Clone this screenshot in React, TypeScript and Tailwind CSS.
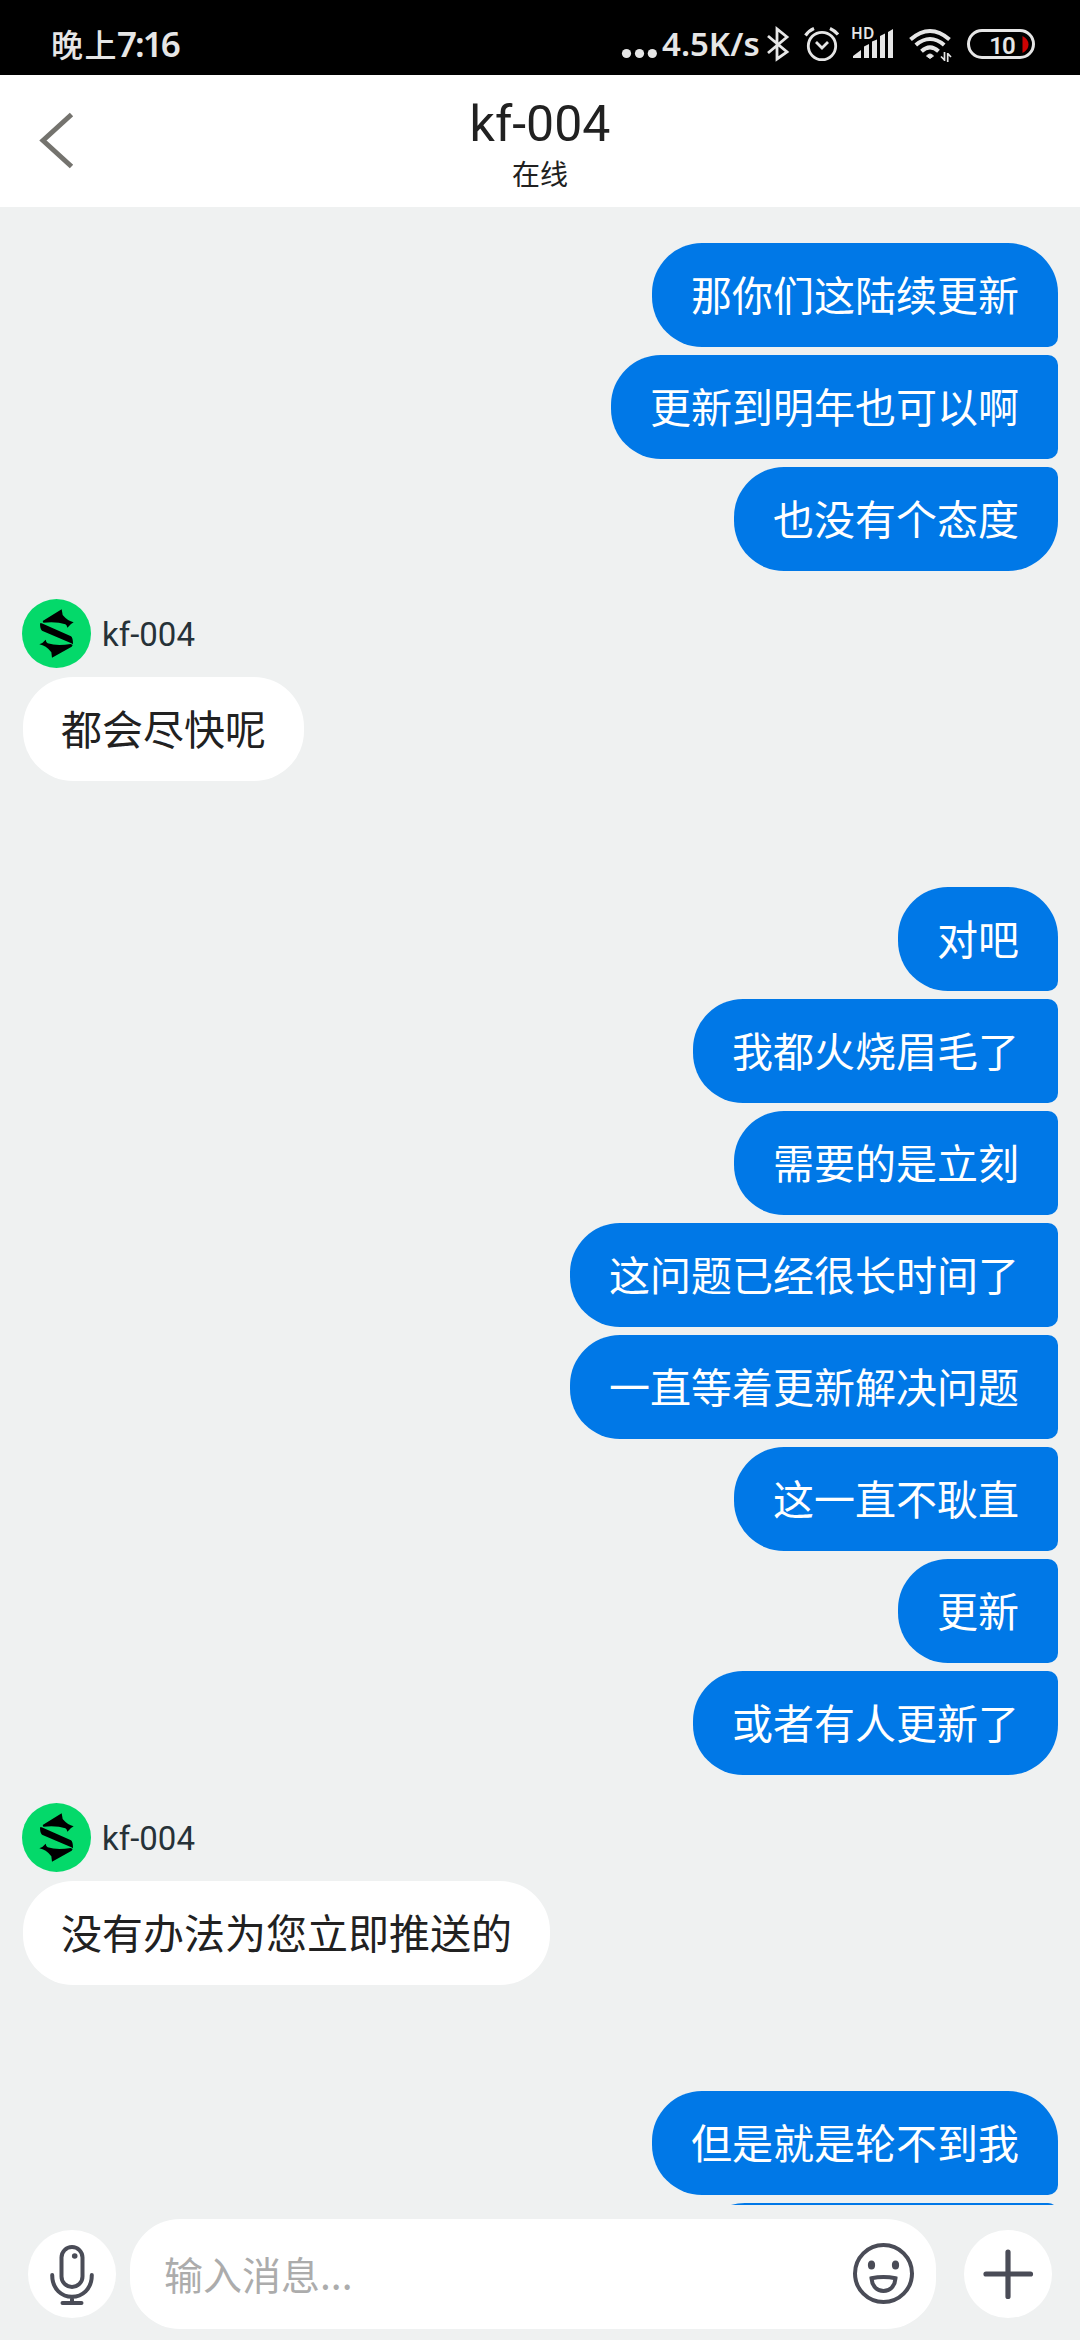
import clsx from "clsx";

const firstBatch = ["那你们这陆续更新", "更新到明年也可以啊", "也没有个态度"];

const secondBatch = [
  "对吧",
  "我都火烧眉毛了",
  "需要的是立刻",
  "这问题已经很长时间了",
  "一直等着更新解决问题",
  "这一直不耿直",
  "更新",
  "或者有人更新了",
];

const StatusBar = () => (
  <div className="flex h-[75px] shrink-0 items-start justify-between bg-black pl-[51px] pr-[45px] text-[#e6e6e6]">
    <div className="flex leading-[48px] font-medium">
      <span className="pt-[19px] text-[32px] tracking-[1.5px]">晚上</span>
      <span className="-ml-px pt-[20px] font-['Noto_Sans'] text-[35px] font-semibold tracking-[-2px]">7:16</span>
    </div>

    <div className="flex">
      <svg width="36" height="75" viewBox="621 0 36 75" fill="currentColor">
        <circle cx="626.5" cy="53.5" r="4.6" />
        <circle cx="639.5" cy="53.5" r="4.6" />
        <circle cx="652.3" cy="53.5" r="4.6" />
      </svg>
      <span className="ml-[5px] w-[104px] whitespace-nowrap pt-[20px] font-['Noto_Sans'] text-[33px] leading-[48px] font-semibold">
        4.5K/s
      </span>

      {/* Bluetooth */}
      <svg width="24" height="75" viewBox="766 0 24 75" fill="none" stroke="currentColor" strokeWidth="2.8">
        <path d="M768 36L787 52L777 59V29L787 37L768 53" />
      </svg>

      {/* Alarm */}
      <svg width="38" height="75" viewBox="803 0 38 75" className="ml-[13px]" fill="none" stroke="currentColor" strokeWidth="2.8">
        <circle cx="822" cy="46" r="13.7" />
        <path d="M816 42L822 48L828 42" />
        <path d="M805.5 35.5Q809 30.5 814 28.5M838 34.5Q834.5 30.5 830 28.5" strokeWidth="3.2" />
      </svg>

      {/* Signal */}
      <div className="relative ml-[10px] h-[75px] w-[43px]">
        <span className="absolute top-[25px] left-0 font-['Noto_Sans'] text-[15.5px] leading-[17px] font-semibold tracking-[0.3px]">
          HD
        </span>
        <svg width="43" height="75" viewBox="851 0 43 75" fill="currentColor">
          <path d="M853 58V56L861 50V58ZM864 58V46.5L869 44V58ZM872 58V41.5L877 39.5V58ZM880 58V36L885 33.5V58ZM888 58V32L893 29V58Z" />
        </svg>
      </div>

      {/* Wifi */}
      <svg width="45" height="75" viewBox="908 0 45 75" className="ml-[14px]" fill="none" stroke="currentColor" strokeWidth="4">
        <path d="M910.5 39.5Q930 22.500 949.5 39.5M915.8 45Q930 33 944.2 45M921.5 51.3Q930 43.5 938.5 51.3" />
        <path d="M926.5 56Q930 52 933.5 56L930 58.5Z" fill="currentColor" strokeWidth="1" />
        <path d="M944.5 52V61M941 56.5L944.5 60M947.7 62V53M951 57L947.700 53.5" strokeWidth="1.7" />
      </svg>

      {/* Battery */}
      <div className="relative mt-[29px] ml-[14px] h-[30px] w-[68px] rounded-full border-3 border-current">
        <span className="block pt-px pl-[2px] text-center font-['Roboto'] text-[24px] leading-[26px] font-semibold tracking-[-1px]">
          10
        </span>
        <svg width="7" height="17" viewBox="0 0 7 17" className="absolute top-[4px] right-[3px]">
          <path d="M0.5 0Q6.5 3 6.5 8.5Q6.5 14 0.5 17Z" fill="#cc0202" />
        </svg>
      </div>
    </div>
  </div>
);

const Header = () => (
  <div className="grid h-[132px] shrink-0 grid-cols-[120px_1fr_120px] bg-white text-[#212121]">
    <svg width="120" height="132" viewBox="0 75 120 132" fill="none" stroke="#74736e" strokeWidth="5">
      <path d="M71.5 114.5L43 140.5L71.5 166.5" />
    </svg>
    <div className="flex flex-col items-center pt-[20px]">
      <div className="font-['Roboto'] text-[50px] leading-[58px]">kf-004</div>
      <div className="text-[28px] leading-[40px]">在线</div>
    </div>
  </div>
);

const SentGroup = ({ messages }: { messages: string[] }) => (
  <div className="flex flex-col items-end gap-2 pr-[22px]">
    {messages.map((message, index) => (
      <div
        key={index}
        className={clsx(
          "h-[104px] rounded-l-[50px] bg-[#0078e7] px-[39px] text-[41px] leading-[100px] whitespace-nowrap text-white",
          index === 0 ? "rounded-tr-[50px]" : "rounded-tr-[10px]",
          index > 0 && index === messages.length - 1 ? "rounded-br-[50px]" : "rounded-br-[10px]"
        )}
      >
        {message}
      </div>
    ))}
  </div>
);

const Avatar = () => (
  <svg width="69" height="69" viewBox="0 0 207 207">
    <circle cx="103.5" cy="103.5" r="103.5" fill="#04d96a" />
    <path d="M119 31L122 48Q137 66 155 70Q145 75 136 86Q135 79 130 76Q105 67 64 71L62 66Z" />
    <path d="M54 73L59 73L147 112Q153 116 153 136L148 133L60 95Q54 91 54 73Z" />
    <path d="M52 136Q63 132 71 122Q72 130 77 133Q105 142 146 135L152 138L149 143L90 176L88 160Q72 139 52 136Z" />
  </svg>
);

const ReceivedMessage = ({ name, text }: { name: string; text: string }) => (
  <div className="mt-[28px] mb-[106px] flex flex-col items-start pl-[22px]">
    <div className="flex h-[69px] items-center">
      <Avatar />
      <span className="ml-[11px] pt-[2px] font-['Roboto'] text-[33px] leading-[40px] text-[#263238]">{name}</span>
    </div>
    <div className="mt-[9px] ml-[1px] h-[104px] rounded-[50px] bg-white px-[38px] text-[41px] leading-[100px] whitespace-nowrap text-[#212121]">
      {text}
    </div>
  </div>
);

const InputBar = () => (
  <div className="flex h-[135px] shrink-0 items-center pt-[3px] pl-[28px]">
    <button className="size-[88px] rounded-full bg-white">
      <svg width="88" height="88" viewBox="28 2230 88 88" fill="none" stroke="#4a4c57" strokeWidth="4" strokeLinecap="round">
        <rect x="61.5" y="2247" width="21" height="40" rx="10.5" />
        <circle cx="74.7" cy="2256" r="2.8" fill="#4a4c57" stroke="none" />
        <path d="M52.2 2275C52.2 2304 91.8 2304 91.8 2275M72 2297V2303M62.5 2303H81.5" />
      </svg>
    </button>

    <div className="ml-[14px] flex h-[110px] w-[806px] items-center justify-between rounded-[50px] bg-white pr-[21px] pl-[34px]">
      <span className="pb-[3px] text-[39px] leading-[60px] text-[#acacac]">输入消息...</span>
      <svg width="64" height="64" viewBox="851 2242 64 64" fill="none" stroke="#4a4c57" strokeWidth="4">
        <circle cx="883.5" cy="2273.5" r="28.5" />
        <ellipse cx="871.5" cy="2265" rx="3.6" ry="4.5" fill="#4a4c57" stroke="none" />
        <ellipse cx="895.5" cy="2265" rx="3.6" ry="4.5" fill="#4a4c57" stroke="none" />
        <path d="M871.5 2278.3Q883.5 2275.5 895.5 2278.3C895 2286 890 2291 883.5 2291S872 2286 871.5 2278.3Z" />
      </svg>
    </div>

    <button className="ml-[28px] size-[88px] rounded-full bg-white">
      <svg width="88" height="88" viewBox="0 0 88 88" fill="none" stroke="#4a4c57" strokeWidth="5.2" strokeLinecap="round">
        <path d="M44 22V66.500M22 44H66.500" />
      </svg>
    </button>
  </div>
);

export default function App() {
  return (
    <div className="flex h-[2340px] w-[1080px] flex-col overflow-hidden bg-[#eff1f1] font-['Noto_Sans_CJK_SC',sans-serif]">
      <StatusBar />
      <Header />

      {/* Conversation */}
      <div className="h-[1998px] shrink-0 overflow-hidden pt-[36px]">
        <SentGroup messages={firstBatch} />
        <ReceivedMessage name="kf-004" text="都会尽快呢" />
        <SentGroup messages={secondBatch} />
        <ReceivedMessage name="kf-004" text="没有办法为您立即推送的" />
        <SentGroup messages={["但是就是轮不到我"]} />
        {/* Top edge of the next bubble, still below the fold */}
        <div className="mt-2 mr-[22px] ml-auto h-[104px] w-[363px] rounded-l-[50px] rounded-r-[10px] bg-[#0078e7]" />
      </div>

      <InputBar />
    </div>
  );
}
